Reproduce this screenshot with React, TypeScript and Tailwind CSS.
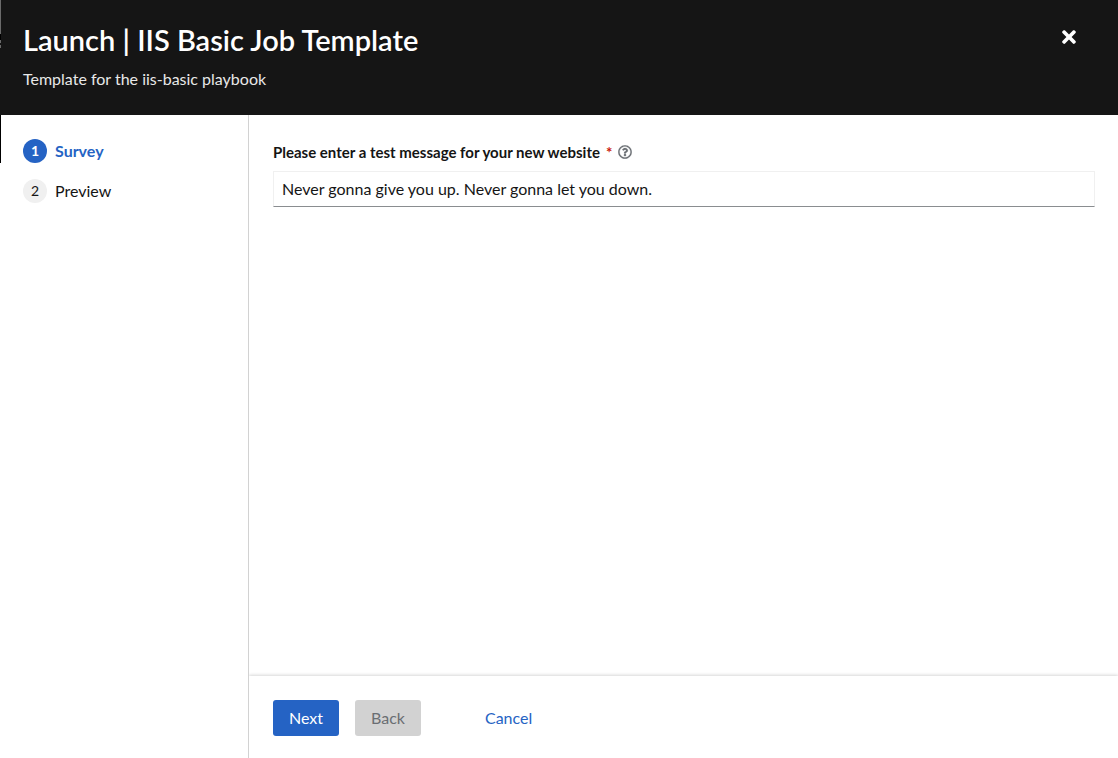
import { useState } from "react";
import { FaRegQuestionCircle, FaTimes } from "react-icons/fa";

const steps = [
  { id: 1, name: "Survey" },
  { id: 2, name: "Preview" },
];

function WizardHeader() {
  return (
    <header className="flex items-start justify-between bg-[#151515] px-[23px] pt-[22px] pb-6 text-white">
      <div className="flex flex-col gap-[9px]">
        <h1 className="text-[29px] leading-9 font-semibold">Launch | IIS Basic Job Template</h1>
        <p className="text-base leading-6 text-[#e8e8e8]">Template for the iis-basic playbook</p>
      </div>
      <button type="button" aria-label="Close" className="mt-px mr-4 flex h-7 w-5 items-center justify-center">
        <FaTimes size={20} />
      </button>
    </header>
  );
}

function WizardNav({ current, onSelect }: { current: number; onSelect: (id: number) => void }) {
  return (
    <nav aria-label="Launch steps" className="w-[249px] shrink-0 border-r border-[#d2d2d2] px-[23px] py-6">
      <ol className="flex flex-col gap-4">
        {steps.map((step) => {
          const active = step.id === current;
          return (
            <li key={step.id}>
              <button
                type="button"
                onClick={() => onSelect(step.id)}
                aria-current={active ? "step" : undefined}
                className={`flex items-center gap-2 leading-6 ${active ? "font-bold text-[#2563c4]" : "text-[#151515]"}`}
              >
                <span
                  className={`flex size-6 items-center justify-center rounded-full text-sm ${
                    active ? "bg-[#2563c4] text-white" : "bg-[#f0f0f0]"
                  }`}
                >
                  {step.id}
                </span>
                <span className="text-base">{step.name}</span>
              </button>
            </li>
          );
        })}
      </ol>
    </nav>
  );
}

export default function App() {
  const [step, setStep] = useState(1);
  const [message, setMessage] = useState("Never gonna give you up. Never gonna let you down.");

  return (
    <div className="relative flex min-h-screen flex-col bg-white font-['Lato','Liberation_Sans',sans-serif] text-base text-[#151515]">
      <div aria-hidden="true" className="absolute top-0 left-0 flex w-px flex-col">
        <span className="h-[34px] bg-[#6a6a6a]" />
        <span className="h-[6px] bg-black" />
        <span className="h-[3px] bg-[#6a6a6a]" />
        <span className="h-[2px] bg-[#151515]" />
        <span className="h-[3px] bg-[#6a6a6a]" />
        <span className="h-[67px] bg-[#151515]" />
        <span className="h-12 bg-black" />
      </div>
      <WizardHeader />
      <div className="flex grow">
        <WizardNav current={step} onSelect={setStep} />
        <div className="flex min-w-0 grow flex-col overflow-hidden">
          <main className="grow py-6 pr-[23px] pl-6">
            <div className="flex items-center pt-[3px]">
              <label htmlFor="message" className="text-[15px] leading-5 font-bold">
                Please enter a test message for your new website
                <span aria-hidden="true" className="ml-1.5 text-[#c9190b]">*</span>
              </label>
              <button type="button" aria-label="More information" className="ml-1.5 text-[#6a6e73]">
                <FaRegQuestionCircle size={14} strokeWidth={8} stroke="currentColor" />
              </button>
            </div>
            <input
              id="message"
              type="text"
              required
              value={message}
              onChange={(event) => setMessage(event.target.value)}
              className="mt-[9px] h-9 w-full border border-[#f0f0f0] border-b-[#8a8d90] px-2 pb-px outline-none"
            />
          </main>
          <footer className="flex items-center px-6 pt-6 pb-[22px] shadow-[0_-1px_3px_rgba(3,3,3,0.16)]">
            <button
              type="button"
              onClick={() => setStep(2)}
              className="h-9 rounded-[3px] bg-[#2563c4] px-4 text-white"
            >
              Next
            </button>
            <button
              type="button"
              disabled={step === 1}
              onClick={() => setStep(1)}
              className="ml-4 h-9 rounded-[3px] bg-[#d2d2d2] px-4 text-[#6a6e73]"
            >
              Back
            </button>
            <button type="button" className="ml-12 h-9 px-4 text-[#2563c4]">
              Cancel
            </button>
          </footer>
        </div>
      </div>
    </div>
  );
}
